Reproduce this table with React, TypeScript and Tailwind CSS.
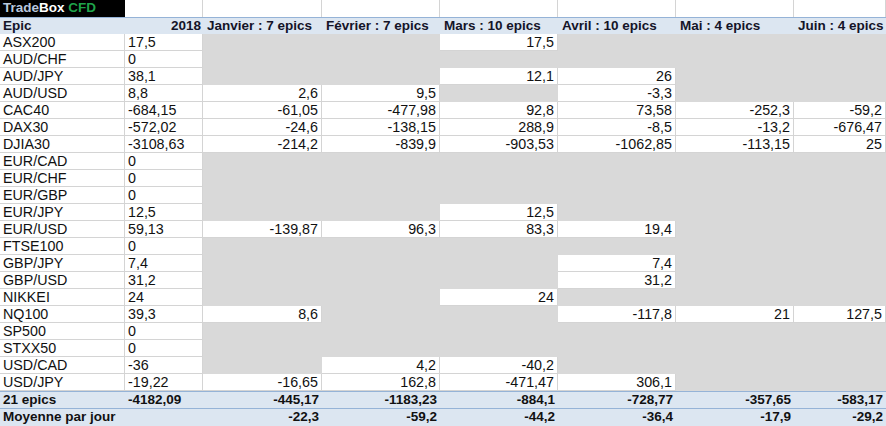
const months = [
  "Janvier : 7 epics",
  "Février : 7 epics",
  "Mars : 10 epics",
  "Avril : 10 epics",
  "Mai : 4 epics",
  "Juin : 4 epics",
];

type Row = { epic: string; year: string; cells: (string | null)[] };

const rows: Row[] = [
  { epic: "ASX200", year: "17,5", cells: [null, null, "17,5", null, null, null] },
  { epic: "AUD/CHF", year: "0", cells: [null, null, null, null, null, null] },
  { epic: "AUD/JPY", year: "38,1", cells: [null, null, "12,1", "26", null, null] },
  { epic: "AUD/USD", year: "8,8", cells: ["2,6", "9,5", null, "-3,3", null, null] },
  { epic: "CAC40", year: "-684,15", cells: ["-61,05", "-477,98", "92,8", "73,58", "-252,3", "-59,2"] },
  { epic: "DAX30", year: "-572,02", cells: ["-24,6", "-138,15", "288,9", "-8,5", "-13,2", "-676,47"] },
  { epic: "DJIA30", year: "-3108,63", cells: ["-214,2", "-839,9", "-903,53", "-1062,85", "-113,15", "25"] },
  { epic: "EUR/CAD", year: "0", cells: [null, null, null, null, null, null] },
  { epic: "EUR/CHF", year: "0", cells: [null, null, null, null, null, null] },
  { epic: "EUR/GBP", year: "0", cells: [null, null, null, null, null, null] },
  { epic: "EUR/JPY", year: "12,5", cells: [null, null, "12,5", null, null, null] },
  { epic: "EUR/USD", year: "59,13", cells: ["-139,87", "96,3", "83,3", "19,4", null, null] },
  { epic: "FTSE100", year: "0", cells: [null, null, null, null, null, null] },
  { epic: "GBP/JPY", year: "7,4", cells: [null, null, null, "7,4", null, null] },
  { epic: "GBP/USD", year: "31,2", cells: [null, null, null, "31,2", null, null] },
  { epic: "NIKKEI", year: "24", cells: [null, null, "24", null, null, null] },
  { epic: "NQ100", year: "39,3", cells: ["8,6", null, null, "-117,8", "21", "127,5"] },
  { epic: "SP500", year: "0", cells: [null, null, null, null, null, null] },
  { epic: "STXX50", year: "0", cells: [null, null, null, null, null, null] },
  { epic: "USD/CAD", year: "-36", cells: [null, "4,2", "-40,2", null, null, null] },
  { epic: "USD/JPY", year: "-19,22", cells: ["-16,65", "162,8", "-471,47", "306,1", null, null] },
];

const totals = ["-445,17", "-1183,23", "-884,1", "-728,77", "-357,65", "-583,17"];
const averages = ["-22,3", "-59,2", "-44,2", "-36,4", "-17,9", "-29,2"];

const grid = "grid grid-cols-[125px_78px_119px_118px_118px_118px_118px_92px]";

export default function App() {
  return (
    <div className="h-[426px] w-[886px] overflow-hidden bg-white font-['Liberation_Sans',Arial,sans-serif] text-[14.3px] leading-[16px] text-[#111]">
      {/* title row */}
      <div className={`${grid} h-[17px]`}>
        <div className="bg-black pl-[3px] text-[13.5px] font-bold whitespace-nowrap">
          <span className="text-[#b8c7dc]">Trade</span>
          <span className="text-white">Box</span>{" "}
          <span className="text-[#1fa34a]">CFD</span>
        </div>
        {[0, 1, 2, 3, 4, 5, 6].map((i) => (
          <div key={i} className="border-r border-[#d4d4d4]" />
        ))}
      </div>

      {/* header */}
      <div className={`${grid} h-[17px] border-t border-[#95b3d7] bg-[#dce6f1] text-[13.5px] font-bold text-[#141428]`}>
        <div className="pl-[3px]">Epic</div>
        <div className="pr-[2px] text-right">2018</div>
        {months.map((m) => (
          <div key={m} className="pl-[4px] whitespace-nowrap">
            {m}
          </div>
        ))}
      </div>

      {/* data */}
      {rows.map((r) => (
        <div key={r.epic} className={`${grid} h-[17px]`}>
          <div className="border-r border-b border-[#d4d4d4] pl-[3px]">{r.epic}</div>
          <div className="border-r border-b border-[#d4d4d4] pl-[3px]">{r.year}</div>
          {r.cells.map((c, i) =>
            c === null ? (
              <div key={i} className="bg-[#d9d9d9]" />
            ) : (
              <div key={i} className="border-r border-b border-[#d4d4d4] bg-white pr-[3px] text-right">
                {c}
              </div>
            ),
          )}
        </div>
      ))}

      {/* totals */}
      <div className={`${grid} h-[17px] border-t border-[#95b3d7] bg-[#dce6f1] text-[13.5px] font-bold`}>
        <div className="pl-[3px]">21 epics</div>
        <div className="pl-[3px]">-4182,09</div>
        {totals.map((t, i) => (
          <div key={i} className="pr-[3px] text-right">
            {t}
          </div>
        ))}
      </div>
      <div className={`${grid} h-[18px] border-t border-[#95b3d7] bg-[#dce6f1] text-[13.5px] font-bold`}>
        <div className="pl-[3px] whitespace-nowrap">Moyenne par jour</div>
        <div />
        {averages.map((t, i) => (
          <div key={i} className="pr-[3px] text-right">
            {t}
          </div>
        ))}
      </div>
    </div>
  );
}
